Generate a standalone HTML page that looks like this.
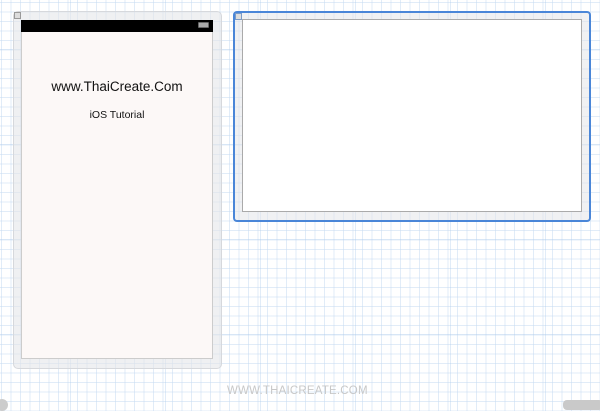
<!DOCTYPE html>
<html><head><style>
html,body{margin:0;padding:0}
body{width:600px;height:407px;overflow:hidden;position:relative;font-family:"Liberation Sans",sans-serif;
background-color:#fff;
background-image:
linear-gradient(to right, rgba(170,200,235,.35) 1px, transparent 1px),
linear-gradient(to bottom, rgba(170,200,235,.35) 1px, transparent 1px),
linear-gradient(to right, rgba(200,220,242,.55) 1px, transparent 1px),
linear-gradient(to bottom, rgba(200,220,242,.55) 1px, transparent 1px);
background-size:95px 95px,95px 95px,9.5px 9.5px,9.5px 9.5px;
background-position:70px 49px,70px 49px,1px 2px,1px 2px;}
.abs{position:absolute;box-sizing:border-box}
</style></head><body>
<div class="abs" style="left:13px;top:11px;width:209px;height:358px;border:1px solid #d6d8dc;border-radius:5px;background:rgba(228,230,234,.6)"></div>
<div class="abs" style="left:14px;top:12px;width:7px;height:7px;border:1px solid #999;background:#ddd"></div>
<div class="abs" style="left:21px;top:20px;width:192px;height:339px;background:#fcf8f7;border:1px solid #ccc"></div>
<div class="abs" style="left:21px;top:20px;width:192px;height:12px;background:#000"></div>
<div class="abs" style="left:198px;top:22px;width:11px;height:6px;background:#aaa;border:1px solid #666;border-radius:1px"></div>
<div class="abs" style="left:21px;top:79px;width:192px;text-align:center;font-size:13.5px;color:#111">www.ThaiCreate.Com</div>
<div class="abs" style="left:21px;top:109px;width:192px;text-align:center;font-size:10.5px;color:#111">iOS Tutorial</div>

<div class="abs" style="left:233px;top:11px;width:358px;height:211px;border:2px solid #4a86d8;border-radius:4px;background:rgba(228,230,234,.55)"></div>
<div class="abs" style="left:235px;top:13px;width:7px;height:7px;border:1px solid #7a9bc8;background:#ddd"></div>
<div class="abs" style="left:242px;top:19px;width:340px;height:193px;background:#fff;border:1px solid #aaa"></div>

<div class="abs" style="left:227px;top:385px;font-size:11.5px;color:#c8c8c8;letter-spacing:0.2px">WWW.THAICREATE.COM</div>
<div class="abs" style="left:563px;top:400px;width:40px;height:10px;background:#c9c9c9;border-radius:4px"></div>
<div class="abs" style="left:-4px;top:399px;width:12px;height:12px;background:#ccc;border-radius:6px"></div>
</body></html>
